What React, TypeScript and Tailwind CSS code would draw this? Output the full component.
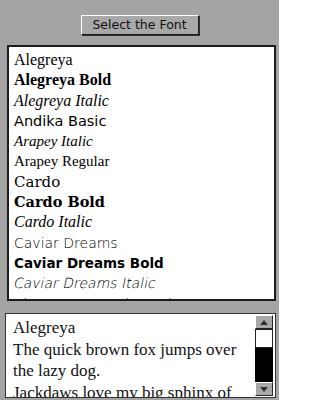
import React from "react";

const fonts: { name: string; cls: string }[] = [
  { name: "Alegreya", cls: "font-['Liberation_Serif',serif] text-[16px]" },
  { name: "Alegreya Bold", cls: "font-['Liberation_Serif',serif] text-[16px] font-bold" },
  { name: "Alegreya Italic", cls: "font-['Liberation_Serif',serif] text-[16px] italic" },
  { name: "Andika Basic", cls: "font-['DejaVu_Sans',sans-serif] text-[14.5px]" },
  { name: "Arapey Italic", cls: "font-['Liberation_Serif',serif] text-[15px] italic text-[#333]" },
  { name: "Arapey Regular", cls: "font-['Liberation_Serif',serif] text-[15px] text-[#222]" },
  { name: "Cardo", cls: "font-['DejaVu_Serif',serif] text-[15px]" },
  { name: "Cardo Bold", cls: "font-['DejaVu_Serif',serif] text-[14.5px] font-bold" },
  { name: "Cardo Italic", cls: "font-['Liberation_Serif',serif] text-[16px] italic" },
  { name: "Caviar Dreams", cls: "font-['DejaVu_Sans',sans-serif] text-[14px] font-extralight text-[#333]" },
  { name: "Caviar Dreams Bold", cls: "font-['DejaVu_Sans',sans-serif] text-[13.5px] font-bold" },
  { name: "Caviar Dreams Italic", cls: "font-['DejaVu_Sans',sans-serif] text-[14px] font-extralight text-[#333]" },
  { name: "Champagne & Limousines", cls: "font-['DejaVu_Sans',sans-serif] text-[14px] font-extralight text-[#333]" },
];

export default function App() {
  return (
    <div className="w-[279px] h-[400px] overflow-hidden bg-[#a4a4a4] flex flex-col">
      {/* Button */}
      <div className="flex justify-center pt-[15px]">
        <button className="w-[118px] h-[20px] bg-[#a8a8a8] border border-t-white border-l-white border-r-[#1a1a1a] border-b-[#1a1a1a] shadow-[1px_1px_0_#333] font-['DejaVu_Sans',sans-serif] text-[12.5px] text-[#111] leading-none">
          Select the Font
        </button>
      </div>

      {/* Font list */}
      <div className="ml-[7px] mr-[3px] mt-[10px] h-[256px] shrink-0 bg-white border-2 border-[#1c1c1c] overflow-hidden pl-[5px] pt-[3px]">
        {fonts.map((f) => (
          <div key={f.name} className={`h-[20.3px] leading-[20px] whitespace-nowrap text-black ${f.cls}`}>
            {f.name === "Caviar Dreams Italic" ? (
              <span className="inline-block -skew-x-12">{f.name}</span>
            ) : (
              f.name
            )}
          </div>
        ))}
      </div>

      {/* Preview */}
      <div className="ml-[5px] mr-[3px] mt-[12px] h-[85px] shrink-0 bg-white border border-[#333] flex overflow-hidden">
        <div className="flex-1 pl-[7px] pt-[3px] font-['Liberation_Serif',serif] text-[17px] leading-[21.5px] text-[#111] overflow-hidden">
          <div>Alegreya</div>
          <div>The quick brown fox jumps over the lazy dog.</div>
          <div>Jackdaws love my big sphinx of quartz.</div>
        </div>
        <div className="w-[18px] mr-[2px] flex flex-col py-[1px]">
          <div className="h-[14px] bg-[#a8a8a8] border border-t-white border-l-white border-r-[#222] border-b-[#222] flex items-center justify-center">
            <svg width="8" height="5" viewBox="0 0 8 5"><path d="M0 5 L4 0 L8 5 Z" fill="#333" /></svg>
          </div>
          <div className="h-[19px] bg-white border border-[#222]" />
          <div className="flex-1 bg-black" />
          <div className="h-[14px] bg-[#a8a8a8] border border-t-white border-l-white border-r-[#222] border-b-[#222] flex items-center justify-center">
            <svg width="8" height="5" viewBox="0 0 8 5"><path d="M0 0 L8 0 L4 5 Z" fill="#333" /></svg>
          </div>
        </div>
      </div>
    </div>
  );
}
